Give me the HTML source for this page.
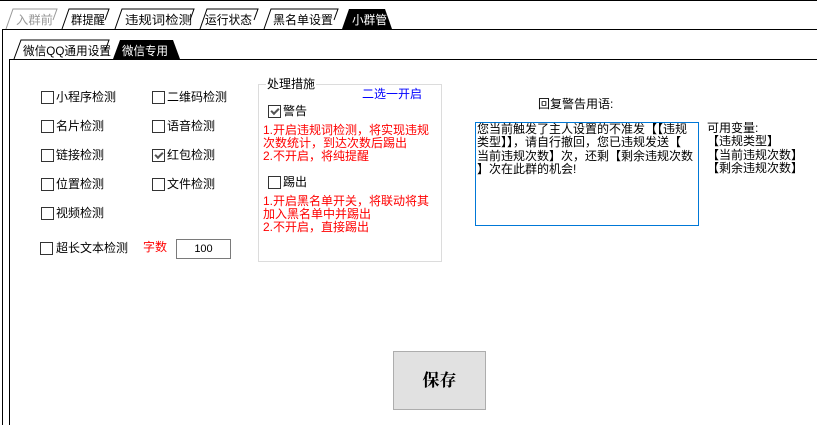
<!DOCTYPE html>
<html><head><meta charset="utf-8"><style>
body{margin:0;width:817px;height:427px;background:#fff;position:relative;overflow:hidden;font-family:"Liberation Sans","Noto Sans CJK SC",sans-serif;font-size:12px;color:#000}
.a{position:absolute;white-space:nowrap;line-height:14px}
.cb{position:absolute;width:11px;height:11px;border:1px solid #333;background:#fff}
.ck::after{content:"";position:absolute;left:2px;top:1px;width:6px;height:3px;border-left:2px solid #555;border-bottom:2px solid #555;transform:rotate(-45deg);top:2px}
.red{color:#f00}
</style></head><body>
<svg width="817" height="427" style="position:absolute;left:0;top:0" font-family="Liberation Sans, Noto Sans CJK SC, sans-serif" font-size="12">
<line x1="0" y1="0.5" x2="817" y2="0.5" stroke="#000"/>
<line x1="2" y1="29.5" x2="817" y2="29.5" stroke="#000"/>
<line x1="2.5" y1="29" x2="2.5" y2="425" stroke="#000"/>
<line x1="9" y1="59.5" x2="817" y2="59.5" stroke="#000"/>
<line x1="9.5" y1="59" x2="9.5" y2="425" stroke="#000"/>
<g fill="#fff" stroke="#000" stroke-width="1">
<polyline points="6,29 13,9 57,9 53,20" stroke="#999"/>
<polyline points="62,29 69,9 109,9 105,20"/>
<polyline points="115,29 122,9 194,9 190,20"/>
<polyline points="200,29 207,9 258,9 254,20"/>
<polyline points="264,29 271,9 338,9 334,20"/>
<polyline points="14,59 21,40 109,40 105,51"/>
</g>
<polygon points="342,29 349,9 385,9 392,29" fill="#000"/>
<polygon points="113,59 120,40 173,40 180,59" fill="#000"/>
<text x="16" y="24" fill="#999" textLength="37" lengthAdjust="spacingAndGlyphs">入群前</text>
<text x="71" y="24" textLength="34" lengthAdjust="spacingAndGlyphs">群提醒</text>
<text x="125" y="24" textLength="67" lengthAdjust="spacingAndGlyphs">违规词检测</text>
<text x="205" y="24" textLength="47" lengthAdjust="spacingAndGlyphs">运行状态</text>
<text x="273" y="24" textLength="60" lengthAdjust="spacingAndGlyphs">黑名单设置</text>
<text x="352" y="24" fill="#fff" textLength="35" lengthAdjust="spacingAndGlyphs">小群管</text>
<text x="23" y="55" textLength="88" lengthAdjust="spacingAndGlyphs">微信QQ通用设置</text>
<text x="122" y="55" fill="#fff" textLength="46" lengthAdjust="spacingAndGlyphs">微信专用</text>
</svg>

<div class="cb" style="left:41px;top:91px"></div><div class="a" style="left:56px;top:90px">小程序检测</div>
<div class="cb" style="left:152px;top:91px"></div><div class="a" style="left:167px;top:90px">二维码检测</div>
<div class="cb" style="left:41px;top:120px"></div><div class="a" style="left:56px;top:119px">名片检测</div>
<div class="cb" style="left:152px;top:120px"></div><div class="a" style="left:167px;top:119px">语音检测</div>
<div class="cb" style="left:41px;top:149px"></div><div class="a" style="left:56px;top:148px">链接检测</div>
<div class="cb ck" style="left:152px;top:149px"></div><div class="a" style="left:167px;top:148px">红包检测</div>
<div class="cb" style="left:41px;top:178px"></div><div class="a" style="left:56px;top:177px">位置检测</div>
<div class="cb" style="left:152px;top:178px"></div><div class="a" style="left:167px;top:177px">文件检测</div>
<div class="cb" style="left:41px;top:207px"></div><div class="a" style="left:56px;top:206px">视频检测</div>
<div class="cb" style="left:40px;top:242px"></div><div class="a" style="left:56px;top:241px">超长文本检测</div>
<div class="a red" style="left:143px;top:240px">字数</div>
<div style="position:absolute;left:176px;top:239px;width:53px;height:18px;border:1px solid #7a7a7a;text-align:center;line-height:18px;font-size:11px">100</div>

<div style="position:absolute;left:258px;top:84px;width:182px;height:176px;border:1px solid #dcdcdc"></div>
<div class="a" style="left:266px;top:77px;background:#fff;padding:0 1px">处理措施</div>
<div class="a" style="left:362px;top:87px;color:#00f">二选一开启</div>
<div class="cb ck" style="left:268px;top:105px"></div><div class="a" style="left:283px;top:104px">警告</div>
<div class="a red" style="left:263px;top:124px;line-height:13px">1.开启违规词检测，将实现违规<br>次数统计，到达次数后踢出<br>2.不开启，将纯提醒</div>
<div class="cb" style="left:268px;top:176px"></div><div class="a" style="left:283px;top:175px">踢出</div>
<div class="a red" style="left:263px;top:195px;line-height:13px">1.开启黑名单开关，将联动将其<br>加入黑名单中并踢出<br>2.不开启，直接踢出</div>

<div class="a" style="left:538px;top:97px">回复警告用语:</div>
<div style="position:absolute;left:475px;top:122px;width:222px;height:102px;border:1px solid #0078d7"></div>
<div class="a" style="left:477px;top:123px;line-height:13.3px">您当前触发了主人设置的不准发【【违规<br>类型】】，请自行撤回，您已违规发送【<br>当前违规次数】次，还剩【剩余违规次数<br>】次在此群的机会!</div>
<div class="a" style="left:707px;top:122px;line-height:13.3px">可用变量:<br>【违规类型】<br>【当前违规次数】<br>【剩余违规次数】</div>

<div style="position:absolute;left:393px;top:351px;width:91px;height:57px;background:#e1e1e1;border:1px solid #adadad;text-align:center;line-height:57px;font-family:'Liberation Serif','Noto Serif CJK SC',serif;font-weight:bold;font-size:17px">保存</div>
</body></html>
